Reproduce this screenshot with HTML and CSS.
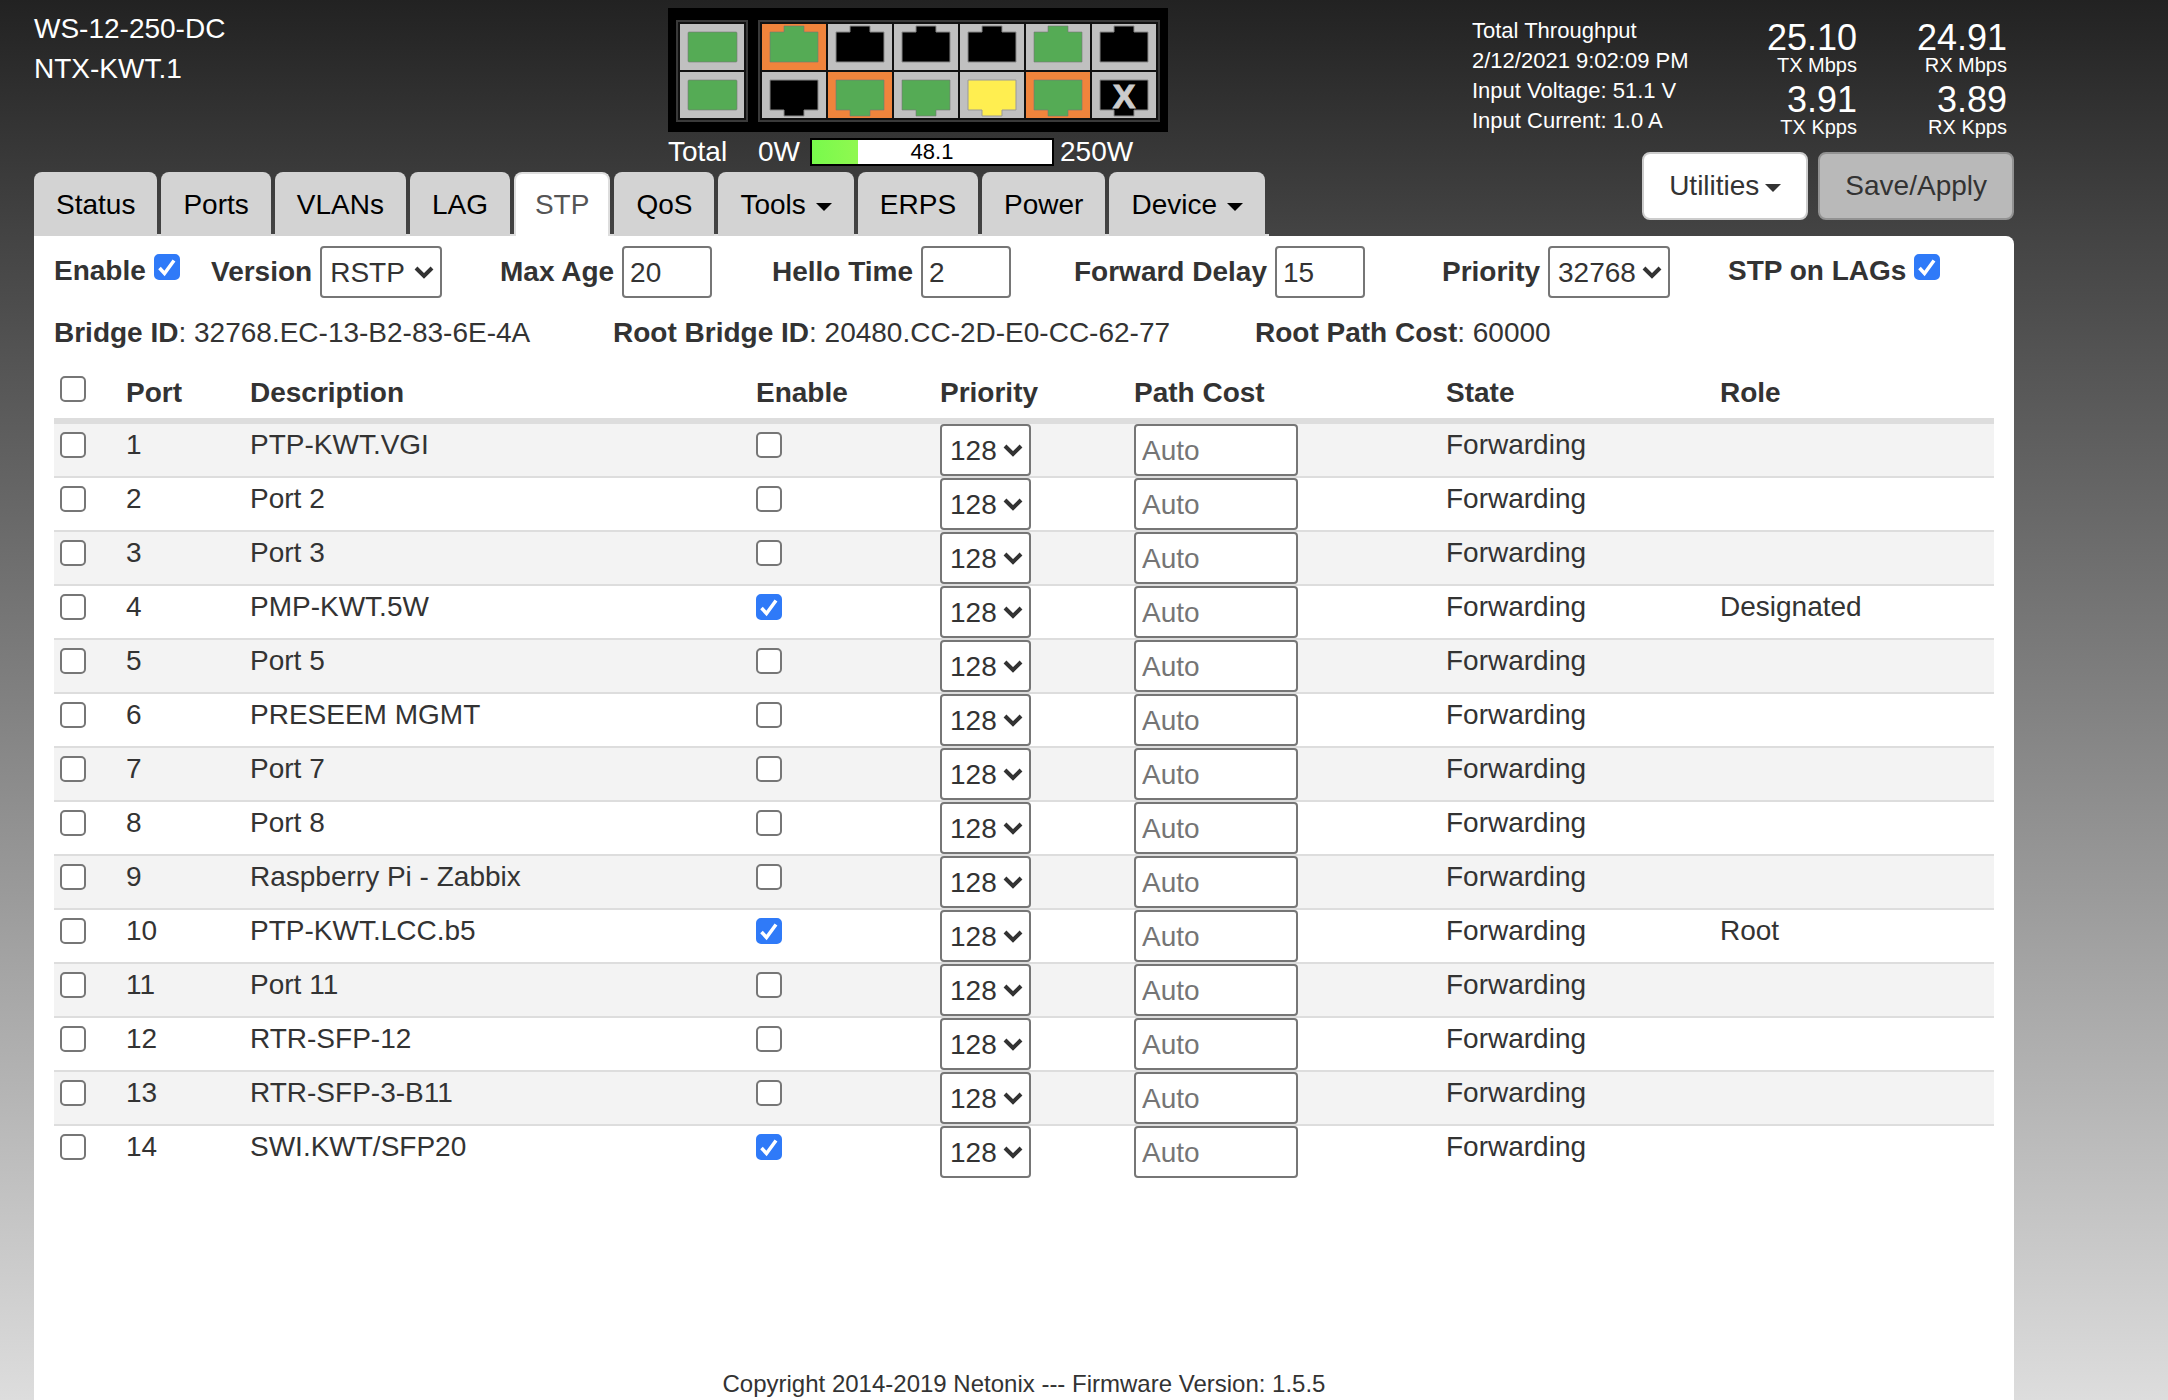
FILE: index.html
```
<!DOCTYPE html>
<html lang="en">

    <head>
        <meta charset="utf-8">
        <title>NTX-KWT.1 - STP</title>
        <link rel="stylesheet" href="styles.css">
    </head>

    <body>

        <div id="container">

            <header class="topBar">

                <div class="deviceName">
                    <div>WS-12-250-DC</div>
                    <div>NTX-KWT.1</div>
                </div>

                <div class="switchBox">
                    <div class="ports">
                        <svg width="500" height="124" viewBox="0 0 500 124">
                            <defs>
                                <rect id="sfp" x="8" y="8" width="49" height="30" rx="1"/>
                                <path id="up" d="M8 8h14v-6h20v6h14v30h-48z"/>
                                <path id="down" d="M8 8h48v30h-14v6h-20v-6h-14z"/>
                            </defs>
                            <rect width="500" height="124" fill="#000"/>
                            <g fill="#111" stroke="#3a3a3a" stroke-width="2">
                                <rect x="9" y="13" width="70" height="100"/>
                                <rect x="91" y="13" width="400" height="100"/>
                            </g>

                            <!-- SFP 13, 14 -->
                            <g transform="translate(12 16)"><rect width="64" height="46" fill="#c0c0c0"/><use href="#sfp" class="link"/></g>
                            <g transform="translate(12 64)"><rect width="64" height="46" fill="#c0c0c0"/><use href="#sfp" class="link"/></g>

                            <!-- top row -->
                            <g transform="translate(94 16)"><rect width="64" height="46" fill="#f0843c"/><use href="#up" class="link"/></g>
                            <g transform="translate(160 16)"><rect width="64" height="46" fill="#c0c0c0"/><use href="#up" class="off"/></g>
                            <g transform="translate(226 16)"><rect width="64" height="46" fill="#c0c0c0"/><use href="#up" class="off"/></g>
                            <g transform="translate(292 16)"><rect width="64" height="46" fill="#c0c0c0"/><use href="#up" class="off"/></g>
                            <g transform="translate(358 16)"><rect width="64" height="46" fill="#c0c0c0"/><use href="#up" class="link"/></g>
                            <g transform="translate(424 16)"><rect width="64" height="46" fill="#c0c0c0"/><use href="#up" class="off"/></g>

                            <!-- bottom row -->
                            <g transform="translate(94 64)"><rect width="64" height="46" fill="#c0c0c0"/><use href="#down" class="off"/></g>
                            <g transform="translate(160 64)"><rect width="64" height="46" fill="#f0843c"/><use href="#down" class="link"/></g>
                            <g transform="translate(226 64)"><rect width="64" height="46" fill="#c0c0c0"/><use href="#down" class="link"/></g>
                            <g transform="translate(292 64)"><rect width="64" height="46" fill="#c0c0c0"/><use href="#down" class="slow"/></g>
                            <g transform="translate(358 64)"><rect width="64" height="46" fill="#f0843c"/><use href="#down" class="link"/></g>
                            <g transform="translate(424 64)"><rect width="64" height="46" fill="#c0c0c0"/><use href="#down" class="off"/><text x="32" y="36" class="disabledMark">X</text></g>
                        </svg>
                    </div>
                    <div class="power">
                        <span class="powerLabel">Total</span>
                        <span class="powerMin">0W</span>
                        <div class="powerBar">
                            <div class="powerFill" style="width:19.2%"></div>
                            <div class="powerText">48.1</div>
                        </div>
                        <span>250W</span>
                    </div>
                </div>

                <div class="status">
                    <div class="info">
                        <div>Total Throughput</div>
                        <div>2/12/2021 9:02:09 PM</div>
                        <div>Input Voltage: 51.1 V</div>
                        <div>Input Current: 1.0 A</div>
                    </div>
                    <div class="rates">
                        <div class="rate"><div class="num">25.10</div><div class="unit">TX Mbps</div></div>
                        <div class="rate"><div class="num">24.91</div><div class="unit">RX Mbps</div></div>
                        <div class="rate"><div class="num">3.91</div><div class="unit">TX Kpps</div></div>
                        <div class="rate"><div class="num">3.89</div><div class="unit">RX Kpps</div></div>
                    </div>
                    <div class="buttons">
                        <button type="button" class="btn">Utilities<span class="caret"></span></button>
                        <button type="button" class="btn" disabled>Save/Apply</button>
                    </div>
                </div>

            </header>

            <nav class="tabs">
                <a href="#status">Status</a>
                <a href="#ports">Ports</a>
                <a href="#vlans">VLANs</a>
                <a href="#lag">LAG</a>
                <a href="#stp" class="active">STP</a>
                <a href="#qos">QoS</a>
                <a href="#tools">Tools<span class="caret"></span></a>
                <a href="#erps">ERPS</a>
                <a href="#power">Power</a>
                <a href="#device">Device<span class="caret"></span></a>
            </nav>

            <main class="panel">

                <form class="settings">
                    <div class="field check"><label for="stpEnable">Enable</label><input type="checkbox" id="stpEnable" checked></div>
                    <div class="field"><label for="version">Version</label><select id="version"><option>STP</option><option selected>RSTP</option></select></div>
                    <div class="field"><label for="maxAge">Max Age</label><input type="text" id="maxAge" value="20"></div>
                    <div class="field"><label for="helloTime">Hello Time</label><input type="text" id="helloTime" value="2"></div>
                    <div class="field"><label for="fwdDelay">Forward Delay</label><input type="text" id="fwdDelay" value="15"></div>
                    <div class="field"><label for="priority">Priority</label><select id="priority"><option>32768</option></select></div>
                    <div class="field check"><label for="stpLags">STP on LAGs</label><input type="checkbox" id="stpLags" checked></div>
                </form>

                <div class="bridge">
                    <div><b>Bridge ID</b>: 32768.EC-13-B2-83-6E-4A</div>
                    <div><b>Root Bridge ID</b>: 20480.CC-2D-E0-CC-62-77</div>
                    <div><b>Root Path Cost</b>: 60000</div>
                </div>

                <table class="stpTable">
                    <thead>
                        <tr>
                            <th class="colSel"><input type="checkbox" aria-label="Select all"></th>
                            <th class="colPort">Port</th>
                            <th>Description</th>
                            <th class="colEnable">Enable</th>
                            <th class="colPriority">Priority</th>
                            <th class="colCost">Path Cost</th>
                            <th class="colState">State</th>
                            <th class="colRole">Role</th>
                        </tr>
                    </thead>
                    <tbody id="portRows"></tbody>
                </table>

                <footer>Copyright 2014-2019 Netonix --- Firmware Version: 1.5.5</footer>

            </main>

        </div>

        <script src="ports.js"></script>

    </body>

</html>
```
FILE: styles.css
```
* {
    box-sizing: border-box;
}

html {
    min-height: 100%;
    background: linear-gradient(#222, #444 17%, #ddd);
}

body {
    margin: 0;
    font-family: "Helvetica Neue", Helvetica, Arial, "Liberation Sans", sans-serif;
    font-size: 28px;
    line-height: 40px;
    color: #333;
}

#container {
    display: flex;
    flex-direction: column;
    min-height: 100vh;
    padding: 0 154px 0 34px;
}

/* header */

.topBar {
    display: grid;
    grid-template-columns: 634px 1fr auto;
    height: 172px;
    padding-top: 8px;
    color: #fff;
}

.deviceName {
    padding-top: 1px;
}

.ports svg {
    display: block;
}

.link {
    fill: #55ab55;
    stroke: #777;
    stroke-opacity: 0.6;
}

.slow {
    fill: #ffee50;
    stroke: #999;
}

.off {
    fill: #000;
    stroke: #888;
}

.disabledMark {
    font-size: 34px;
    font-weight: bold;
    fill: #ccc;
    stroke: #ccc;
    text-anchor: middle;
}

.power {
    display: flex;
    align-items: center;
}

.powerLabel {
    width: 90px;
}

.powerMin {
    width: 52px;
}

.powerBar {
    position: relative;
    width: 244px;
    height: 28px;
    margin-right: 6px;
    border: 2px solid #000;
    background: #fff;
}

.powerFill {
    height: 100%;
    background: linear-gradient(90deg, #78fa4c, #90f850);
}

.powerText {
    position: absolute;
    inset: 0;
    font-size: 22px;
    line-height: 24px;
    text-align: center;
    color: #000;
}

.status {
    display: grid;
    grid-template-columns: 236px 306px;
    align-content: start;
}

.info {
    padding-top: 8px;
    font-size: 22px;
    line-height: 30px;
}

.rates {
    display: grid;
    grid-template-columns: 1fr 150px;
    padding: 13px 7px 0 0;
    text-align: right;
}

.rate {
    height: 62px;
}

.num {
    font-size: 36px;
    line-height: 34px;
}

.unit {
    font-size: 20px;
    line-height: 20px;
}

.buttons {
    grid-column: 1 / 3;
    display: flex;
    justify-content: flex-end;
    gap: 10px;
    padding-top: 7px;
}

.btn {
    height: 68px;
    padding: 0 25px;
    border: 2px solid #ccc;
    border-radius: 8px;
    background: #fff;
    font: inherit;
    color: #333;
}

.btn:disabled {
    border-color: #929292;
    background: #b9b9b9;
}

.caret {
    display: inline-block;
    margin-left: 6px;
    border: 8px solid transparent;
    border-top-color: currentColor;
    border-bottom: 0;
    vertical-align: middle;
}

/* tabs */

.tabs {
    display: flex;
    align-self: flex-start;
    gap: 4px;
    padding-right: 4px;
    border-bottom: 2px solid #ddd;
}

.tabs a {
    height: 64px;
    margin-bottom: -2px;
    padding: 13px 22px 0;
    border-radius: 8px 8px 0 0;
    background: #d3d3d3;
    color: #000;
    text-decoration: none;
}

.tabs a.active {
    padding: 11px 19px 0;
    border: 2px solid #ddd;
    border-bottom: 0;
    background: #fff;
    color: #555;
}

.tabs .caret {
    margin-left: 10px;
}

/* content */

.panel {
    display: flex;
    flex: 1;
    flex-direction: column;
    padding: 10px 20px 0;
    border-radius: 0 8px 0 0;
    background: #fff;
}

.settings {
    display: grid;
    grid-template-columns: 157fr 289fr 272fr 302fr 368fr 286fr 266fr;
}

.field {
    display: flex;
    align-items: center;
    gap: 8px;
    white-space: nowrap;
}

.field label {
    font-weight: bold;
}

.field.check {
    align-items: flex-start;
    padding-top: 5px;
}

select,
input[type="text"] {
    display: block;
    height: 52px;
    margin: 0;
    border: 2px solid #767676;
    border-radius: 4px;
    background-color: #fff;
    font: inherit;
    color: #333;
}

input[type="text"] {
    width: 90px;
    padding: 1px 6px 0;
}

input::placeholder {
    color: #757575;
}

select {
    appearance: none;
    padding: 1px 32px 0 8px;
    background-image: url("data:image/svg+xml,%3Csvg xmlns='http://www.w3.org/2000/svg' width='20' height='14'%3E%3Cpath d='M2 3l8 8 8-8' fill='none' stroke='%23333' stroke-width='4'/%3E%3C/svg%3E");
    background-position: right 6px center;
    background-repeat: no-repeat;
}

#version,
#priority {
    width: 122px;
}

input[type="checkbox"] {
    appearance: none;
    display: block;
    width: 26px;
    height: 26px;
    margin: 3px 0 0;
    border: 2px solid #767676;
    border-radius: 5px;
    background: #fff;
}

input[type="checkbox"]:checked {
    border-color: #2f7af8;
    background: #2f7af8 url("data:image/svg+xml,%3Csvg xmlns='http://www.w3.org/2000/svg' width='22' height='22'%3E%3Cpath d='M3.500 12l5 5.500L18 4.500' fill='none' stroke='%23fff' stroke-width='3.500'/%3E%3C/svg%3E") center no-repeat;
}

.bridge {
    display: grid;
    grid-template-columns: 559fr 642fr 739fr;
    padding: 15px 0 20px;
}

.stpTable {
    width: 100%;
    border-collapse: collapse;
    table-layout: fixed;
}

.stpTable th {
    padding: 0 0 5px;
    border-bottom: 6px solid #ddd;
    text-align: left;
    vertical-align: top;
}

.stpTable td {
    height: 52px;
    padding: 0;
    line-height: 42px;
    vertical-align: top;
}

.stpTable tbody tr + tr td {
    border-top: 2px solid #ddd;
}

.stpTable tbody tr:nth-child(odd) {
    background: #f3f3f3;
}

.stpTable input[type="checkbox"] {
    margin-top: 8px;
}

.stpTable thead input[type="checkbox"] {
    margin-top: 3px;
}

.stpTable td:first-child input,
.stpTable th:first-child input {
    margin-left: 6px;
}

.stpTable input[type="text"] {
    width: 164px;
}

/* description takes what is left */
.colSel { width: 72px; }
.colPort { width: 124px; }
.colEnable { width: 184px; }
.colPriority { width: 194px; }
.colCost { width: 312px; }
.colState { width: 274px; }
.colRole { width: 274px; }

footer {
    margin-top: auto;
    padding-top: 40px;
    font-size: 24px;
    line-height: 32px;
    text-align: center;
}
```
FILE: ports.js
```
var ports = [
    { name: 'PTP-KWT.VGI' },
    { name: 'Port 2' },
    { name: 'Port 3' },
    { name: 'PMP-KWT.5W', enabled: true, role: 'Designated' },
    { name: 'Port 5' },
    { name: 'PRESEEM MGMT' },
    { name: 'Port 7' },
    { name: 'Port 8' },
    { name: 'Raspberry Pi - Zabbix' },
    { name: 'PTP-KWT.LCC.b5', enabled: true, role: 'Root' },
    { name: 'Port 11' },
    { name: 'RTR-SFP-12' },
    { name: 'RTR-SFP-3-B11' },
    { name: 'SWI.KWT/SFP20', enabled: true }
];

var rows = '';
ports.forEach (function (port, i)
{
    var n = i + 1;
    rows += '<tr>' +
        '<td><input type="checkbox" aria-label="Select port ' + n + '"></td>' +
        '<td>' + n + '</td>' +
        '<td>' + port.name + '</td>' +
        '<td><input type="checkbox" aria-label="Enable port ' + n + '"' + (port.enabled ? ' checked' : '') + '></td>' +
        '<td><select aria-label="Priority of port ' + n + '"><option>128</option></select></td>' +
        '<td><input type="text" placeholder="Auto" aria-label="Path cost of port ' + n + '"></td>' +
        '<td>Forwarding</td>' +
        '<td>' + (port.role || '') + '</td>' +
        '</tr>';
});
document.getElementById ('portRows').innerHTML = rows;
```
